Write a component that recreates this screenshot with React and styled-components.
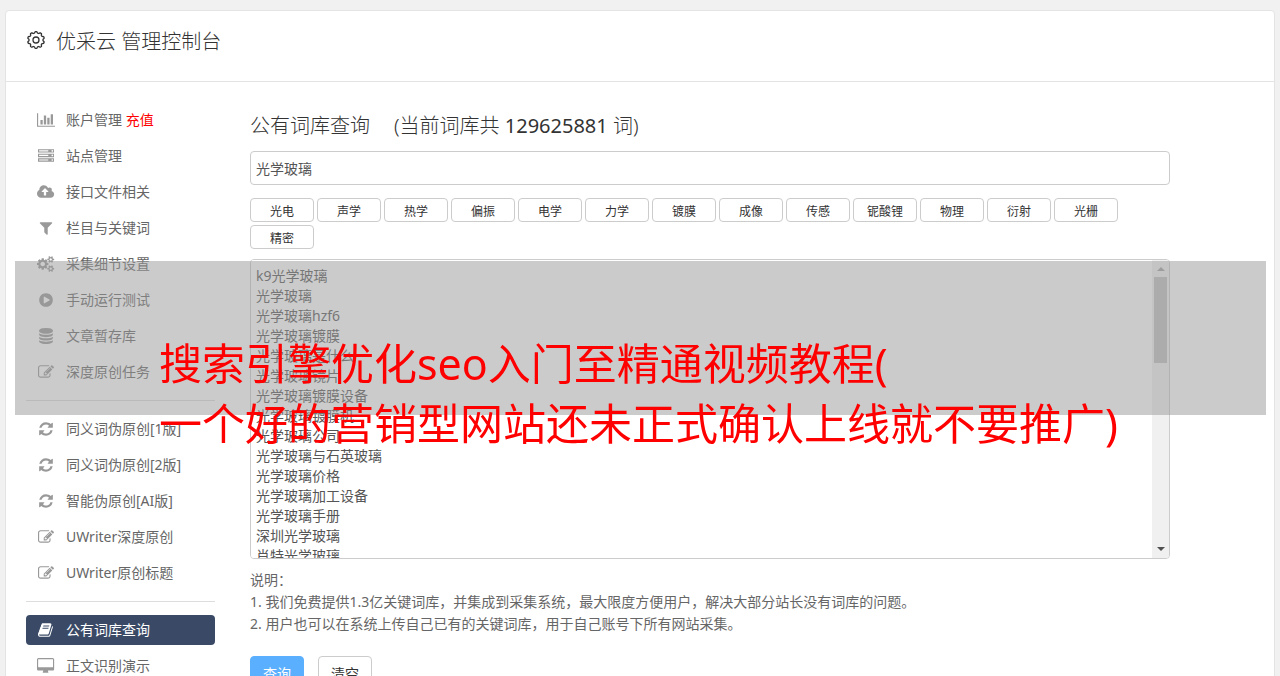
import React, { useState } from 'react';
import styled, { createGlobalStyle } from 'styled-components';

const GlobalStyle = createGlobalStyle`
  * {
    box-sizing: border-box;
  }
  body {
    margin: 0;
    background: #f1f1f1;
    color: #666;
    font: 14px/20px "Noto Sans", "Noto Sans CJK SC", sans-serif;
  }
  button, input, textarea {
    font-family: inherit;
  }
`

const Page = styled.div`
  position: relative;
  padding: 10px 5px 0;
`

const Card = styled.div`
  background: #fff;
  border: 1px solid #e4e4e4;
  border-radius: 4px 4px 0 0;
`

const Header = styled.header`
  display: flex;
  align-items: flex-start;
  gap: 10px;
  height: 71px;
  padding: 19px 20px 0;
  border-bottom: 1px solid #e4e4e4;
  color: #333;
`

const Title = styled.h1`
  margin: 0;
  font-size: 20px;
  line-height: 24px;
  font-weight: 300;
`

const Body = styled.div`
  display: flex;
  gap: 35px;
  padding: 23px 20px 0;
`

const Sidebar = styled.nav`
  flex: none;
  width: 189px;
`

const MenuLink = styled.a`
  display: flex;
  align-items: center;
  height: 30px;
  margin-bottom: 6px;
  padding-left: 10px;
  border-radius: 4px;
  text-decoration: none;
  white-space: pre;
  color: ${props => (props.$active ? '#fff' : '#666')};
  background: ${props => (props.$active ? '#3a4a66' : 'transparent')};

  svg {
    color: ${props => (props.$active ? '#fff' : '#999')};
  }
`

const IconBox = styled.span`
  display: flex;
  justify-content: center;
  width: 20px;
  margin-right: 10px;
`

const Hot = styled.span`
  color: #f00;
`

const Divider = styled.hr`
  height: 1px;
  margin: 13px 0;
  border: 0;
  background: #ddd;
`

const Main = styled.main`
  flex: 1;
  min-width: 0;
  max-width: 920px;
  padding: 9px 0 20px;
`

const SectionTitle = styled.h2`
  display: flex;
  gap: 24px;
  margin: 0 0 13px;
  font-size: 20px;
  line-height: 24px;
  font-weight: 300;
  color: #333;
`

const Count = styled.span`
  font-weight: 400;
`

const SearchInput = styled.input`
  display: block;
  width: 100%;
  height: 34px;
  padding: 0 5px;
  border: 1px solid #ccc;
  border-radius: 4px;
  outline: none;
  font-size: 14px;
  color: #555;
`

const Tags = styled.div`
  display: flex;
  flex-wrap: wrap;
  gap: 3px;
  margin: 13px 0 10px;
`

const Tag = styled.button`
  width: 64px;
  height: 24px;
  padding: 4px 0 0;
  border: 1px solid #ccc;
  border-radius: 4px;
  background: #fff;
  font-size: 12px;
  line-height: 18px;
  color: #333;
`

const ListBox = styled.div`
  display: flex;
  height: 300px;
  border: 1px solid #ccc;
  border-radius: 4px;
  overflow: hidden;
`

const WordList = styled.textarea`
  flex: 1;
  padding: 6px 5px;
  border: 0;
  outline: none;
  resize: none;
  scrollbar-width: none;
  background: #fff;
  font-size: 14px;
  line-height: 20px;
  color: #555;
`

const ScrollTrack = styled.div`
  display: flex;
  flex-direction: column;
  align-items: center;
  width: 17px;
  padding: 7px 0;
  background: #f0f0f0;
`

const Arrow = styled.span`
  border: 4px solid transparent;
  border-top-width: ${props => (props.$up ? 0 : '4px')};
  border-bottom-width: ${props => (props.$up ? '4px' : 0)};
  border-top-color: #505050;
  border-bottom-color: #a3a3a3;
`

const Thumb = styled.div`
  width: 13px;
  height: 86px;
  margin: 6px 0 auto;
  background: #c1c1c1;
`

const Notes = styled.p`
  margin: 10px 0 21px;
  line-height: 22px;
`

const Actions = styled.div`
  display: flex;
  gap: 14px;
`

const Button = styled.button`
  width: 54px;
  height: 34px;
  padding: 0;
  border: 1px solid ${props => (props.$primary ? '#5aafff' : '#ccc')};
  border-radius: 4px;
  background: ${props => (props.$primary ? '#5aafff' : '#fff')};
  font-size: 14px;
  color: ${props => (props.$primary ? '#fff' : '#333')};
`

//translucent band with the headline, lies over the page
const Banner = styled.div`
  position: absolute;
  top: 261px;
  left: 15px;
  right: 14px;
  height: 154px;
  padding: 73px 0 0 144px;
  background: rgba(151, 151, 151, 0.5);
  font-size: 43px;
  line-height: 60px;
  color: #f00;
  white-space: nowrap;
  pointer-events: none;
`

//[viewBox, path], every glyph is drawn on a 1792 high grid
const glyphs = {
  chart: ['0 0 2048 1792', 'M640 896v512h-256v-512h256zm384-512v1024h-256v-1024h256zm1024 1152v128h-2048v-1536h128v1408h1920zm-640-896v768h-256v-768h256zm384-384v1152h-256v-1152h256z'],
  server: ['0 0 1792 1792', 'M128 1408h1024v-128h-1024v128zm0-512h1024v-128h-1024v128zm1568 448q0-40-28-68t-68-28-68 28-28 68 28 68 68 28 68-28 28-68zm-1568-960h1024v-128h-1024v128zm1568 448q0-40-28-68t-68-28-68 28-28 68 28 68 68 28 68-28 28-68zm0-512q0-40-28-68t-68-28-68 28-28 68 28 68 68 28 68-28 28-68zm96 832v384h-1792v-384h1792zm0-512v384h-1792v-384h1792zm0-512v384h-1792v-384h1792z'],
  cloud: ['-64 0 1920 1792', 'M1216 864q0-14-9-23l-352-352q-9-9-23-9t-23 9l-351 351q-10 12-10 24 0 14 9 23t23 9h224v352q0 13 9.5 22.5t22.5 9.5h192q13 0 22.5-9.5t9.5-22.5v-352h224q13 0 22.5-9.5t9.5-22.5zm640 288q0 159-112.5 271.5t-271.5 112.5h-1088q-185 0-316.5-131.5t-131.5-316.5q0-130 70-240t188-165q-2-30-2-43 0-212 150-362t362-150q156 0 285.5 87t188.5 231q71-62 166-62 106 0 181 75t75 181q0 76-41 138 130 31 213.5 135.5t83.5 238.5z'],
  filter: ['0 0 1792 1792', 'M1595 295q17 41-14 70l-493 493v742q0 42-39 59-13 5-25 5-27 0-45-19l-256-256q-19-19-19-45v-486l-493-493q-31-29-14-70 17-39 59-39h1280q42 0 59 39z'],
  cogs: ['-64 0 1920 1792', 'M832 896q0-106-75-181t-181-75-181 75-75 181 75 181 181 75 181-75 75-181zm768 512q0-52-38-90t-90-38-90 38-38 90q0 53 37.5 90.5t90.5 37.5 90.5-37.5 37.5-90.5zm0-1024q0-52-38-90t-90-38-90 38-38 90q0 53 37.5 90.5t90.5 37.5 90.5-37.5 37.5-90.5zm-384 421v185q0 10-7 19.5t-16 10.5l-155 24q-11 35-32 76 34 48 90 115 7 11 7 20 0 12-7 19-23 30-82.5 89.5t-78.5 59.5q-11 0-21-7l-115-90q-37 19-77 31-11 108-23 155-7 24-30 24h-186q-11 0-20-7.5t-10-17.5l-23-153q-34-10-75-31l-118 89q-7 7-20 7-11 0-21-8-144-133-144-160 0-9 7-19 10-14 41-53t47-61q-23-44-35-82l-152-24q-10-1-17-9.5t-7-19.5v-185q0-10 7-19.5t16-10.5l155-24q11-35 32-76-34-48-90-115-7-11-7-20 0-12 7-20 22-30 82-89t79-59q11 0 21 7l115 90q34-18 77-32 11-108 23-154 7-24 30-24h186q11 0 20 7.5t10 17.5l23 153q34 10 75 31l118-89q8-7 20-7 11 0 21 8 144 133 144 160 0 8-7 19-12 16-42 54t-45 60q23 48 34 82l152 23q10 2 17 10.5t7 19.5zm640 533v140q0 16-149 31-12 27-30 52 51 113 51 138 0 4-4 7-122 71-124 71-8 0-46-47t-52-68q-20 2-30 2t-30-2q-14 21-52 68t-46 47q-2 0-124-71-4-3-4-7 0-25 51-138-18-25-30-52-149-15-149-31v-140q0-16 149-31 13-29 30-52-51-113-51-138 0-4 4-7 4-2 35-20t59-34 30-16q8 0 46 46.5t52 67.5q20-2 30-2t30 2q51-71 92-112l6-2q4 0 124 70 4 3 4 7 0 25-51 138 17 23 30 52 149 15 149 31zm0-1024v140q0 16-149 31-12 27-30 52 51 113 51 138 0 4-4 7-122 71-124 71-8 0-46-47t-52-68q-20 2-30 2t-30-2q-14 21-52 68t-46 47q-2 0-124-71-4-3-4-7 0-25 51-138-18-25-30-52-149-15-149-31v-140q0-16 149-31 13-29 30-52-51-113-51-138 0-4 4-7 4-2 35-20t59-34 30-16q8 0 46 46.5t52 67.5q20-2 30-2t30 2q51-71 92-112l6-2q4 0 124 70 4 3 4 7 0 25-51 138 17 23 30 52 149 15 149 31z'],
  play: ['0 0 1792 1792', 'M896 128q209 0 385.5 103t279.5 279.5 103 385.5-103 385.5-279.5 279.5-385.5 103-385.5-103-279.5-279.5-103-385.5 103-385.5 279.5-279.5 385.5-103zm384 823q32-18 32-55t-32-55l-544-320q-31-19-64-1-32 19-32 56v640q0 37 32 56 16 8 32 8 17 0 32-9z'],
  database: ['0 0 1792 1792', 'M896 768q237 0 443-43t325-127v170q0 69-103 128t-280 93.5-385 34.5-385-34.5-280-93.5-103-128v-170q119 84 325 127t443 43zm0 768q237 0 443-43t325-127v170q0 69-103 128t-280 93.5-385 34.5-385-34.5-280-93.5-103-128v-170q119 84 325 127t443 43zm0-384q237 0 443-43t325-127v170q0 69-103 128t-280 93.5-385 34.5-385-34.5-280-93.5-103-128v-170q119 84 325 127t443 43zm0-1152q208 0 385 34.5t280 93.5 103 128v128q0 69-103 128t-280 93.5-385 34.5-385-34.5-280-93.5-103-128v-128q0-69 103-128t280-93.5 385-34.5z'],
  edit: ['0 0 1792 1792', 'M888 1184l116-116-152-152-116 116v56h96v96h56zm440-720q-16-16-33 1l-350 350q-17 17-1 33t33-1l350-350q17-17 1-33zm80 594v190q0 119-84.5 203.5t-203.5 84.5h-832q-119 0-203.5-84.5t-84.5-203.5v-832q0-119 84.5-203.5t203.5-84.5h832q63 0 117 25 15 7 18 23 3 17-9 29l-49 49q-14 14-32 8-23-6-45-6h-832q-66 0-113 47t-47 113v832q0 66 47 113t113 47h832q66 0 113-47t47-113v-126q0-13 9-22l64-64q15-15 35-7t20 29zm-96-738l288 288-672 672h-288v-288zm444 132l-92 92-288-288 92-92q28-28 68-28t68 28l152 152q28 28 28 68t-28 68z'],
  refresh: ['0 0 1792 1792', 'M1639 1056q0 5-1 7-64 268-268 434.5t-478 166.5q-146 0-282.5-55t-243.5-157l-129 129q-19 19-45 19t-45-19-19-45v-448q0-26 19-45t45-19h448q26 0 45 19t19 45-19 45l-137 137q71 66 161 102t187 36q134 0 250-65t186-179q11-17 53-117 8-23 30-23h192q13 0 22.5 9.5t9.5 22.5zm25-800v448q0 26-19 45t-45 19h-448q-26 0-45-19t-19-45 19-45l138-138q-148-137-349-137-134 0-250 65t-186 179q-11 17-53 117-8 23-30 23h-199q-13 0-22.5-9.5t-9.5-22.5v-7q65-268 270-434.5t480-166.5q146 0 284 55.5t245 156.5l130-129q19-19 45-19t45 19 19 45z'],
  book: ['0 0 1792 1792', 'M1639 478q40 57 18 129l-275 906q-19 64-76.5 107.5t-122.5 43.5h-923q-77 0-148.5-53.5t-99.5-131.5q-24-67-2-127 0-4 3-27t4-37q1-8-3-21.5t-3-19.5q2-11 8-21t16.5-23.5 16.5-23.5q23-38 45-91.5t30-91.5q3-10 .5-30t-.5-28q3-11 17-28t17-23q21-36 42-92t25-90q1-9-2.5-32t.5-28q4-13 22-30.5t22-22.5q19-26 42.5-84.5t27.5-96.5q1-8-3-25.5t-2-26.5q2-8 9-18t18-23 17-21q8-12 16.5-30.5t15-35 16-36 19.5-32 26.5-23.5 36-11.5 47.5 5.5l-1 3q38-9 51-9h761q74 0 114 56t18 130l-274 906q-36 119-71.5 153.5t-128.5 34.5h-869q-27 0-38 15-11 16-1 43 24 70 144 70h923q29 0 56-15.5t35-41.5l300-987q7-22 5-57 38 15 59 43zm-1064 2q-4 13 2 22.5t20 9.5h608q13 0 25.5-9.5t16.5-22.5l21-64q4-13-2-22.5t-20-9.5h-608q-13 0-25.5 9.5t-16.5 22.5zm-83 256q-4 13 2 22.5t20 9.5h608q13 0 25.5-9.5t16.5-22.5l21-64q4-13-2-22.5t-20-9.5h-608q-13 0-25.5 9.5t-16.5 22.5z'],
  desktop: ['-64 0 1920 1792', 'M1728 992v-832q0-13-9.5-22.5t-22.5-9.5h-1600q-13 0-22.5 9.5t-9.5 22.5v832q0 13 9.5 22.5t22.5 9.5h1600q13 0 22.5-9.5t9.5-22.5zm128-832v1088q0 66-47 113t-113 47h-544q0 37 16 77.5t32 71 16 43.5q0 26-19 45t-45 19h-512q-26 0-45-19t-19-45q0-14 16-44t32-70 16-78h-544q-66 0-113-47t-47-113v-1088q0-66 47-113t113-47h1600q66 0 113 47t47 113z'],
}

const Glyph = ({name}) => (
  <IconBox>
    <svg viewBox={glyphs[name][0]} height="16" fill="currentColor" aria-hidden="true">
      <path d={glyphs[name][1]} />
    </svg>
  </IconBox>
)

//rim of the gear, ten shallow rounded teeth
const gearRim = () => {
  const points = []
  for (let i = 0; i < 120; i++) {
    const a = (i / 120) * Math.PI * 2
    const wave = Math.tanh(2 * Math.cos(a * 10)) * 0.75
    const r = 7.7 + wave
    points.push(`${(10 + r * Math.sin(a)).toFixed(2)} ${(10 - r * Math.cos(a)).toFixed(2)}`)
  }
  return `M${points.join('L')}Z`
}

const Gear = () => (
  <svg width="20" height="20" viewBox="0 0 20 20" fill="none" stroke="currentColor" strokeWidth="1.3" strokeLinejoin="round" aria-hidden="true">
    <path d={gearRim()} />
    <circle cx="10" cy="10" r="3" />
  </svg>
)

//one array per block, blocks are split by a divider
const menu = [
  [
    { icon: 'chart', label: '账户管理', hot: '充值' },
    { icon: 'server', label: '站点管理' },
    { icon: 'cloud', label: '接口文件相关' },
    { icon: 'filter', label: '栏目与关键词' },
    { icon: 'cogs', label: '采集细节设置' },
    { icon: 'play', label: '手动运行测试' },
    { icon: 'database', label: '文章暂存库' },
    { icon: 'edit', label: '深度原创任务' },
  ],
  [
    { icon: 'refresh', label: '同义词伪原创[1版]' },
    { icon: 'refresh', label: '同义词伪原创[2版]' },
    { icon: 'refresh', label: '智能伪原创[AI版]' },
    { icon: 'edit', label: 'UWriter深度原创' },
    { icon: 'edit', label: 'UWriter原创标题' },
  ],
  [
    { icon: 'book', label: '公有词库查询', active: true },
    { icon: 'desktop', label: '正文识别演示' },
  ],
]

const tags = ['光电', '声学', '热学', '偏振', '电学', '力学', '镀膜', '成像', '传感', '铌酸锂', '物理', '衍射', '光栅', '精密']

const words = [
  'k9光学玻璃',
  '光学玻璃',
  '光学玻璃hzf6',
  '光学玻璃镀膜',
  '光学玻璃是什么',
  '光学玻璃镜片',
  '光学玻璃镀膜设备',
  '光学玻璃镀膜机',
  '光学玻璃公司',
  '光学玻璃与石英玻璃',
  '光学玻璃价格',
  '光学玻璃加工设备',
  '光学玻璃手册',
  '深圳光学玻璃',
  '肖特光学玻璃',
]

const App = () => {
  const [query, setQuery] = useState('光学玻璃');
  const [result, setResult] = useState(words.join('\n'));

  const clear = () => {
    setQuery('')
    setResult('')
  }

  return (
    <Page lang="zh-CN">
      <GlobalStyle />
      <Card>
        <Header>
          <Gear />
          <Title>优采云 管理控制台</Title>
        </Header>
        <Body>
          <Sidebar>
            {menu.map((block, index) => (
              <React.Fragment key={index}>
                {index > 0 && <Divider />}
                {block.map(item => (
                  <MenuLink href="#" key={item.label} $active={item.active}>
                    <Glyph name={item.icon} />
                    {item.label}
                    {item.hot && <Hot> {item.hot}</Hot>}
                  </MenuLink>
                ))}
              </React.Fragment>
            ))}
          </Sidebar>
          <Main>
            <SectionTitle>
              <span>公有词库查询</span>
              <span>(当前词库共 <Count>129625881</Count> 词)</span>
            </SectionTitle>
            <SearchInput aria-label="关键词" value={query} onChange={e => setQuery(e.target.value)} />
            <Tags>
              {tags.map(tag => (
                <Tag type="button" key={tag} onClick={() => setQuery(tag)}>{tag}</Tag>
              ))}
            </Tags>
            <ListBox>
              <WordList aria-label="词库" value={result} onChange={e => setResult(e.target.value)} />
              <ScrollTrack>
                <Arrow $up />
                <Thumb />
                <Arrow />
              </ScrollTrack>
            </ListBox>
            <Notes>
              说明：<br />
              1. 我们免费提供1.3亿关键词库，并集成到采集系统，最大限度方便用户，解决大部分站长没有词库的问题。<br />
              2. 用户也可以在系统上传自己已有的关键词库，用于自己账号下所有网站采集。
            </Notes>
            <Actions>
              <Button type="button" $primary>查询</Button>
              <Button type="button" onClick={clear}>清空</Button>
            </Actions>
          </Main>
        </Body>
      </Card>
      <Banner>
        搜索引擎优化seo入门至精通视频教程(<br />
        一个好的营销型网站还未正式确认上线就不要推广)
      </Banner>
    </Page>
  )
}

export default App
